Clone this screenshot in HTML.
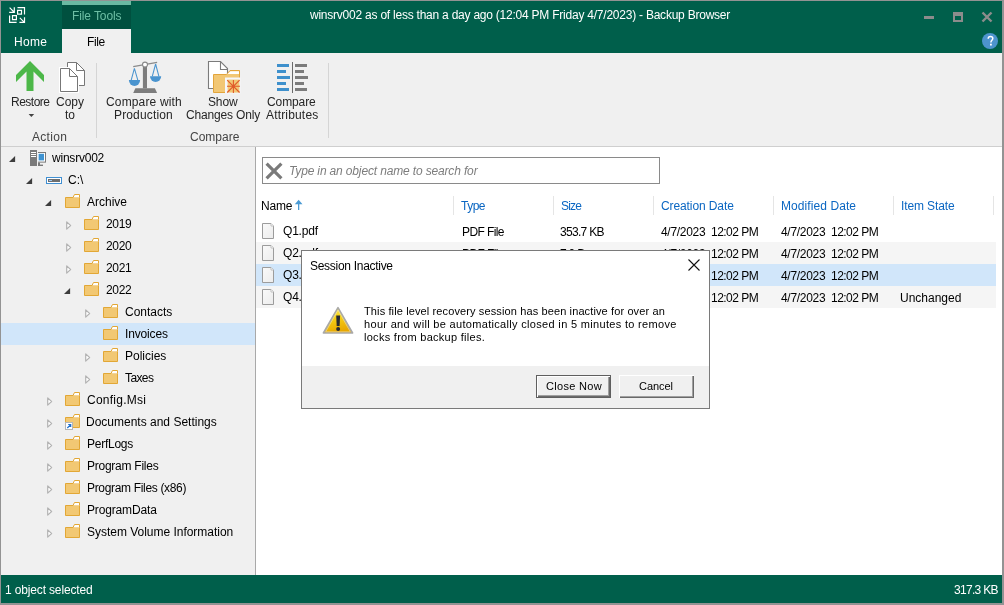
<!DOCTYPE html>
<html><head><meta charset="utf-8"><style>
html,body{margin:0;padding:0;width:1004px;height:605px;overflow:hidden;background:#fff}
.t{position:absolute;will-change:transform;font-family:"Liberation Sans",sans-serif;font-size:12px;white-space:pre;line-height:14px}
svg{display:block}
</style></head><body>
<div style="position:absolute;left:0px;top:0px;width:1004px;height:605px;background:#939393;"></div>
<div style="position:absolute;left:1px;top:1px;width:1001px;height:52px;background:#005f4b;"></div>
<div style="position:absolute;left:62px;top:1px;width:69px;height:4px;background:#6ab9a2;"></div>
<div style="position:absolute;left:62px;top:5px;width:69px;height:24px;background:#00503f;"></div>
<div style="position:absolute;left:62px;top:29px;width:69px;height:24px;background:#f0f0f0;"></div>
<svg style="position:absolute;left:0px;top:0px" width="40" height="40" viewBox="0 0 40 40"><g fill="none" stroke="#fff" stroke-width="1.2">
<path d="M9.6 7.6 L14 12 M9.2 12.3 H14.3 V7.2" />
<path d="M17.5 7.6 H24.5 V14.6 M17.6 10.3 H21.5 V14.2 H17.6 Z" />
<path d="M9.6 15.4 V22.3 H16.6 M12.5 15.6 H16.4 V19.6 H12.5 Z" />
<path d="M19.8 17.8 L24.2 22.2 M19.4 22.3 H24.5 V17.2" />
</g></svg>
<div class="t" style="left:310px;top:8px;color:#fff;letter-spacing:-0.23px;">winsrv002 as of less than a day ago (12:04 PM Friday 4/7/2023) - Backup Browser</div>
<div class="t" style="left:72px;top:9px;color:#6dbfa5;letter-spacing:-0.1px;">File Tools</div>
<div class="t" style="left:14px;top:35px;color:#fff;letter-spacing:0.3px;">Home</div>
<div class="t" style="left:87px;top:35px;color:#000;letter-spacing:-0.4px;">File</div>
<div style="position:absolute;left:924px;top:16px;width:10px;height:3px;background:#8c8c8c;"></div>
<div style="position:absolute;left:953px;top:12px;width:6px;height:4px;background:transparent;border:2px solid #8c8c8c;border-top-width:4px"></div>
<svg style="position:absolute;left:980px;top:10px" width="14" height="14" viewBox="0 0 14 14"><path d="M2.5 2.5 L11.5 11.5 M11.5 2.5 L2.5 11.5" stroke="#8c8c8c" stroke-width="2.4"/></svg>
<svg style="position:absolute;left:982px;top:33px" width="16" height="16" viewBox="0 0 16 16"><circle cx="8" cy="8" r="8" fill="#4d94cd"/><path d="M6.2 5.8 C6.2 4.3 7.1 3.6 8.5 3.6 C9.9 3.6 10.8 4.4 10.8 5.6 C10.8 7.2 8.9 7.4 8.9 9.4" fill="none" stroke="#fff" stroke-width="1.5"/><rect x="8" y="10.7" width="1.8" height="1.8" fill="#fff"/></svg>
<div style="position:absolute;left:1px;top:53px;width:1001px;height:93px;background:#f0f0f0;"></div>
<div style="position:absolute;left:62px;top:53px;width:69px;height:1px;background:#f0f0f0;"></div>
<div style="position:absolute;left:1px;top:146px;width:1001px;height:1px;background:#cfcfcf;"></div>
<div style="position:absolute;left:96px;top:63px;width:1px;height:75px;background:#d5d5d5;"></div>
<div style="position:absolute;left:328px;top:63px;width:1px;height:75px;background:#d5d5d5;"></div>
<svg style="position:absolute;left:0px;top:55px" width="60" height="40" viewBox="0 0 60 40"><path d="M30 6 L44 20 V27 L33.5 16.5 V36 H26.5 V16.5 L16 27 V20 Z" fill="#4cb748"/></svg>
<div class="t" style="left:11px;top:95px;color:#262626;letter-spacing:-0.5px;">Restore</div>
<svg style="position:absolute;left:26px;top:112px" width="10" height="6" viewBox="0 0 10 6"><path d="M2.6 2 H8.2 L5.4 4.9 Z" fill="#444"/></svg>
<svg style="position:absolute;left:56px;top:58px" width="34" height="38" viewBox="0 0 34 38"><g fill="#fff" stroke="#777" stroke-width="1">
<path d="M11.5 4.5 H20.5 L28.5 12.5 V27.5 H11.5 Z"/><path d="M20.5 4.5 V12.5 H28.5" fill="none"/>
<path d="M4.5 10.5 H13.5 L21.5 18.5 V33.5 H4.5 Z" stroke="#fff" stroke-width="3"/>
<path d="M4.5 10.5 H13.5 L21.5 18.5 V33.5 H4.5 Z"/><path d="M13.5 10.5 V18.5 H21.5" fill="none"/>
</g></svg>
<div class="t" style="left:56px;top:95px;color:#262626;">Copy</div>
<div class="t" style="left:65px;top:108px;color:#262626;">to</div>
<div class="t" style="left:32px;top:130px;color:#444;letter-spacing:0.3px;">Action</div>
<svg style="position:absolute;left:125px;top:58px" width="40" height="38" viewBox="0 0 40 38">
<path d="M8.2 8.6 L32.1 4.4" stroke="#8a8a8a" stroke-width="1.1"/>
<rect x="17.9" y="8" width="4.1" height="22.4" fill="#7d7d7d"/>
<path d="M10.4 30.2 H29.9 L32.1 34.9 H8.2 Z" fill="#7d7d7d"/>
<circle cx="20" cy="6.6" r="2.5" fill="#fff" stroke="#8a8a8a" stroke-width="1.1"/>
<path d="M9.4 10.4 L6.2 22.2 M9.4 10.4 L12.8 22.2 M30.6 6 L27.3 18.4 M30.6 6 L33.9 18.4" stroke="#4a94cf" stroke-width="1.05" fill="none"/>
<path d="M3.9 22 H15.1 A5.6 6 0 0 1 3.9 22 Z" fill="#4a94cf"/>
<path d="M25 18.2 H36.2 A5.6 5.8 0 0 1 25 18.2 Z" fill="#4a94cf"/>
</svg>
<div class="t" style="left:106px;top:95px;color:#262626;letter-spacing:0.15px;">Compare with</div>
<div class="t" style="left:114px;top:108px;color:#262626;letter-spacing:0.15px;">Production</div>
<svg style="position:absolute;left:204px;top:58px" width="40" height="38" viewBox="0 0 40 38">
<path d="M4.5 3.5 H16.5 L23.5 10.5 V30.5 H4.5 Z" fill="#fff" stroke="#7b7b7b" stroke-width="1.1"/>
<path d="M16.5 3.5 V11.5 H23.5" fill="none" stroke="#7b7b7b" stroke-width="1.1"/>
<path d="M22.5 16.5 L26 12.5 H35.5 V34.5 H9.5 V16.5 Z" fill="#f2c774" stroke="#e3a53b" stroke-width="1"/>
<path d="M23.5 16 L26.4 13.3 H35 V16 Z" fill="#fff"/>
<path d="M21 19.5 H36.5 V35.5 H21 Z" fill="#f6f7fa"/>
<path d="M23.6 21.6 H35.4 V34.6 H23.6 Z" fill="#f2c774"/>
<g stroke="#e05a2a" stroke-width="1.1">
<path d="M29.4 22 V35 M23 28.3 H36 M23.2 22.1 L35.6 34.5 M35.6 22.1 L23.2 34.5"/>
</g>

</svg>
<div class="t" style="left:208px;top:95px;color:#262626;letter-spacing:-0.13px;">Show</div>
<div class="t" style="left:186px;top:108px;color:#262626;letter-spacing:-0.17px;">Changes Only</div>
<svg style="position:absolute;left:270px;top:58px" width="40" height="38" viewBox="0 0 40 38"><rect x="7" y="6" width="12" height="3" fill="#3e90cc"/><rect x="25" y="6" width="12" height="3" fill="#7b7b7b"/><rect x="7" y="12" width="9" height="3" fill="#3e90cc"/><rect x="25" y="12" width="9" height="3" fill="#7b7b7b"/><rect x="7" y="18" width="13" height="3" fill="#3e90cc"/><rect x="25" y="18" width="13" height="3" fill="#7b7b7b"/><rect x="7" y="24" width="9" height="3" fill="#3e90cc"/><rect x="25" y="24" width="9" height="3" fill="#7b7b7b"/><rect x="7" y="30" width="12" height="3" fill="#3e90cc"/><rect x="25" y="30" width="12" height="3" fill="#7b7b7b"/><rect x="22" y="4" width="1" height="31" fill="#6a6a6a"/></svg>
<div class="t" style="left:267px;top:95px;color:#262626;letter-spacing:-0.1px;">Compare</div>
<div class="t" style="left:266px;top:108px;color:#262626;letter-spacing:0.17px;">Attributes</div>
<div class="t" style="left:190px;top:130px;color:#444;">Compare</div>
<div style="position:absolute;left:1px;top:147px;width:254px;height:428px;background:#f0f0f0;"></div>
<div style="position:absolute;left:255px;top:147px;width:1px;height:428px;background:#a9a9a9;"></div>
<div style="position:absolute;left:256px;top:147px;width:746px;height:428px;background:#fff;"></div>
<svg style="position:absolute;left:9px;top:156px" width="7" height="7" viewBox="0 0 7 7"><path d="M0 6.1 H6.1 V0 Z" fill="#3d3d3d"/></svg>
<svg style="position:absolute;left:30px;top:150px" width="17" height="17" viewBox="0 0 17 17"><rect x="0" y="0" width="7" height="16" fill="#7a7a7a"/>
<rect x="1" y="2" width="5" height="1" fill="#fff"/><rect x="1" y="4" width="5" height="1" fill="#fff"/><rect x="1" y="6" width="5" height="1" fill="#fff"/>
<rect x="8" y="2" width="8" height="10.6" fill="#7a7a7a"/><rect x="8" y="3" width="7" height="8.6" fill="#fff"/><rect x="8.6" y="3.8" width="5.4" height="6.6" fill="#3f93d1"/>
<rect x="8" y="12.6" width="2" height="3.4" fill="#7a7a7a"/><rect x="8" y="14.6" width="5" height="1.4" fill="#7a7a7a"/></svg>
<div class="t" style="left:52px;top:151px;color:#000;letter-spacing:-0.22px;">winsrv002</div>
<svg style="position:absolute;left:26px;top:178px" width="7" height="7" viewBox="0 0 7 7"><path d="M0 6.1 H6.1 V0 Z" fill="#3d3d3d"/></svg>
<svg style="position:absolute;left:46px;top:177px" width="16" height="7" viewBox="0 0 16 7"><rect x="0.5" y="0.5" width="15" height="6" fill="#fff" stroke="#3f8fd2"/><rect x="2" y="2" width="12" height="3" fill="#6e6e6e"/><rect x="3" y="3" width="3" height="1" fill="#9fc8ee"/></svg>
<div class="t" style="left:68px;top:173px;color:#000;">C:\</div>
<svg style="position:absolute;left:45px;top:200px" width="7" height="7" viewBox="0 0 7 7"><path d="M0 6.1 H6.1 V0 Z" fill="#3d3d3d"/></svg>
<svg style="position:absolute;left:65px;top:194px" width="15" height="14" viewBox="0 0 15 14"><path d="M0.5 3.5 H14.5 V13.5 H0.5 Z" fill="#f2c873" stroke="#e2a735"/>
<path d="M8 3.5 L9.5 0.5 H14.5 V3.5" fill="#fff" stroke="#e2a735"/></svg>
<div class="t" style="left:87px;top:195px;color:#000;">Archive</div>
<svg style="position:absolute;left:66px;top:221px" width="6" height="9" viewBox="0 0 6 9"><path d="M0.7 0.9 L4.6 4.5 L0.7 8.1 Z" fill="#fff" stroke="#b3b3b3" stroke-width="1.2" stroke-linejoin="round"/></svg>
<svg style="position:absolute;left:84px;top:216px" width="15" height="14" viewBox="0 0 15 14"><path d="M0.5 3.5 H14.5 V13.5 H0.5 Z" fill="#f2c873" stroke="#e2a735"/>
<path d="M8 3.5 L9.5 0.5 H14.5 V3.5" fill="#fff" stroke="#e2a735"/></svg>
<div class="t" style="left:106px;top:217px;color:#000;letter-spacing:-0.3px;">2019</div>
<svg style="position:absolute;left:66px;top:243px" width="6" height="9" viewBox="0 0 6 9"><path d="M0.7 0.9 L4.6 4.5 L0.7 8.1 Z" fill="#fff" stroke="#b3b3b3" stroke-width="1.2" stroke-linejoin="round"/></svg>
<svg style="position:absolute;left:84px;top:238px" width="15" height="14" viewBox="0 0 15 14"><path d="M0.5 3.5 H14.5 V13.5 H0.5 Z" fill="#f2c873" stroke="#e2a735"/>
<path d="M8 3.5 L9.5 0.5 H14.5 V3.5" fill="#fff" stroke="#e2a735"/></svg>
<div class="t" style="left:106px;top:239px;color:#000;letter-spacing:-0.3px;">2020</div>
<svg style="position:absolute;left:66px;top:265px" width="6" height="9" viewBox="0 0 6 9"><path d="M0.7 0.9 L4.6 4.5 L0.7 8.1 Z" fill="#fff" stroke="#b3b3b3" stroke-width="1.2" stroke-linejoin="round"/></svg>
<svg style="position:absolute;left:84px;top:260px" width="15" height="14" viewBox="0 0 15 14"><path d="M0.5 3.5 H14.5 V13.5 H0.5 Z" fill="#f2c873" stroke="#e2a735"/>
<path d="M8 3.5 L9.5 0.5 H14.5 V3.5" fill="#fff" stroke="#e2a735"/></svg>
<div class="t" style="left:106px;top:261px;color:#000;letter-spacing:-0.3px;">2021</div>
<svg style="position:absolute;left:64px;top:288px" width="7" height="7" viewBox="0 0 7 7"><path d="M0 6.1 H6.1 V0 Z" fill="#3d3d3d"/></svg>
<svg style="position:absolute;left:84px;top:282px" width="15" height="14" viewBox="0 0 15 14"><path d="M0.5 3.5 H14.5 V13.5 H0.5 Z" fill="#f2c873" stroke="#e2a735"/>
<path d="M8 3.5 L9.5 0.5 H14.5 V3.5" fill="#fff" stroke="#e2a735"/></svg>
<div class="t" style="left:106px;top:283px;color:#000;letter-spacing:-0.3px;">2022</div>
<svg style="position:absolute;left:85px;top:309px" width="6" height="9" viewBox="0 0 6 9"><path d="M0.7 0.9 L4.6 4.5 L0.7 8.1 Z" fill="#fff" stroke="#b3b3b3" stroke-width="1.2" stroke-linejoin="round"/></svg>
<svg style="position:absolute;left:103px;top:304px" width="15" height="14" viewBox="0 0 15 14"><path d="M0.5 3.5 H14.5 V13.5 H0.5 Z" fill="#f2c873" stroke="#e2a735"/>
<path d="M8 3.5 L9.5 0.5 H14.5 V3.5" fill="#fff" stroke="#e2a735"/></svg>
<div class="t" style="left:125px;top:305px;color:#000;">Contacts</div>
<div style="position:absolute;left:1px;top:323px;width:254px;height:22px;background:#d1e6fa;"></div>
<svg style="position:absolute;left:103px;top:326px" width="15" height="14" viewBox="0 0 15 14"><path d="M0.5 3.5 H14.5 V13.5 H0.5 Z" fill="#f2c873" stroke="#e2a735"/>
<path d="M8 3.5 L9.5 0.5 H14.5 V3.5" fill="#fff" stroke="#e2a735"/></svg>
<div class="t" style="left:125px;top:327px;color:#000;letter-spacing:-0.15px;">Invoices</div>
<svg style="position:absolute;left:85px;top:353px" width="6" height="9" viewBox="0 0 6 9"><path d="M0.7 0.9 L4.6 4.5 L0.7 8.1 Z" fill="#fff" stroke="#b3b3b3" stroke-width="1.2" stroke-linejoin="round"/></svg>
<svg style="position:absolute;left:103px;top:348px" width="15" height="14" viewBox="0 0 15 14"><path d="M0.5 3.5 H14.5 V13.5 H0.5 Z" fill="#f2c873" stroke="#e2a735"/>
<path d="M8 3.5 L9.5 0.5 H14.5 V3.5" fill="#fff" stroke="#e2a735"/></svg>
<div class="t" style="left:125px;top:349px;color:#000;">Policies</div>
<svg style="position:absolute;left:85px;top:375px" width="6" height="9" viewBox="0 0 6 9"><path d="M0.7 0.9 L4.6 4.5 L0.7 8.1 Z" fill="#fff" stroke="#b3b3b3" stroke-width="1.2" stroke-linejoin="round"/></svg>
<svg style="position:absolute;left:103px;top:370px" width="15" height="14" viewBox="0 0 15 14"><path d="M0.5 3.5 H14.5 V13.5 H0.5 Z" fill="#f2c873" stroke="#e2a735"/>
<path d="M8 3.5 L9.5 0.5 H14.5 V3.5" fill="#fff" stroke="#e2a735"/></svg>
<div class="t" style="left:125px;top:371px;color:#000;letter-spacing:-0.6px;">Taxes</div>
<svg style="position:absolute;left:47px;top:397px" width="6" height="9" viewBox="0 0 6 9"><path d="M0.7 0.9 L4.6 4.5 L0.7 8.1 Z" fill="#fff" stroke="#b3b3b3" stroke-width="1.2" stroke-linejoin="round"/></svg>
<svg style="position:absolute;left:65px;top:392px" width="15" height="14" viewBox="0 0 15 14"><path d="M0.5 3.5 H14.5 V13.5 H0.5 Z" fill="#f2c873" stroke="#e2a735"/>
<path d="M8 3.5 L9.5 0.5 H14.5 V3.5" fill="#fff" stroke="#e2a735"/></svg>
<div class="t" style="left:87px;top:393px;color:#000;letter-spacing:0.25px;">Config.Msi</div>
<svg style="position:absolute;left:47px;top:419px" width="6" height="9" viewBox="0 0 6 9"><path d="M0.7 0.9 L4.6 4.5 L0.7 8.1 Z" fill="#fff" stroke="#b3b3b3" stroke-width="1.2" stroke-linejoin="round"/></svg>
<svg style="position:absolute;left:65px;top:414px" width="15" height="14" viewBox="0 0 15 14"><path d="M0.5 3.5 H14.5 V13.5 H0.5 Z" fill="#f2c873" stroke="#e2a735"/>
<path d="M8 3.5 L9.5 0.5 H14.5 V3.5" fill="#fff" stroke="#e2a735"/></svg>
<svg style="position:absolute;left:65px;top:422px" width="8" height="8" viewBox="0 0 8 8"><rect x="0.5" y="0.5" width="7" height="7" fill="#fff" stroke="#b5b5b5"/><path d="M2.3 6 L5.5 2.8 M3.2 2.5 H5.7 V5" stroke="#1c6fd0" stroke-width="1.2" fill="none"/></svg>
<div class="t" style="left:86px;top:415px;color:#000;">Documents and Settings</div>
<svg style="position:absolute;left:47px;top:441px" width="6" height="9" viewBox="0 0 6 9"><path d="M0.7 0.9 L4.6 4.5 L0.7 8.1 Z" fill="#fff" stroke="#b3b3b3" stroke-width="1.2" stroke-linejoin="round"/></svg>
<svg style="position:absolute;left:65px;top:436px" width="15" height="14" viewBox="0 0 15 14"><path d="M0.5 3.5 H14.5 V13.5 H0.5 Z" fill="#f2c873" stroke="#e2a735"/>
<path d="M8 3.5 L9.5 0.5 H14.5 V3.5" fill="#fff" stroke="#e2a735"/></svg>
<div class="t" style="left:87px;top:437px;color:#000;letter-spacing:-0.25px;">PerfLogs</div>
<svg style="position:absolute;left:47px;top:463px" width="6" height="9" viewBox="0 0 6 9"><path d="M0.7 0.9 L4.6 4.5 L0.7 8.1 Z" fill="#fff" stroke="#b3b3b3" stroke-width="1.2" stroke-linejoin="round"/></svg>
<svg style="position:absolute;left:65px;top:458px" width="15" height="14" viewBox="0 0 15 14"><path d="M0.5 3.5 H14.5 V13.5 H0.5 Z" fill="#f2c873" stroke="#e2a735"/>
<path d="M8 3.5 L9.5 0.5 H14.5 V3.5" fill="#fff" stroke="#e2a735"/></svg>
<div class="t" style="left:87px;top:459px;color:#000;letter-spacing:-0.25px;">Program Files</div>
<svg style="position:absolute;left:47px;top:485px" width="6" height="9" viewBox="0 0 6 9"><path d="M0.7 0.9 L4.6 4.5 L0.7 8.1 Z" fill="#fff" stroke="#b3b3b3" stroke-width="1.2" stroke-linejoin="round"/></svg>
<svg style="position:absolute;left:65px;top:480px" width="15" height="14" viewBox="0 0 15 14"><path d="M0.5 3.5 H14.5 V13.5 H0.5 Z" fill="#f2c873" stroke="#e2a735"/>
<path d="M8 3.5 L9.5 0.5 H14.5 V3.5" fill="#fff" stroke="#e2a735"/></svg>
<div class="t" style="left:87px;top:481px;color:#000;letter-spacing:-0.33px;">Program Files (x86)</div>
<svg style="position:absolute;left:47px;top:507px" width="6" height="9" viewBox="0 0 6 9"><path d="M0.7 0.9 L4.6 4.5 L0.7 8.1 Z" fill="#fff" stroke="#b3b3b3" stroke-width="1.2" stroke-linejoin="round"/></svg>
<svg style="position:absolute;left:65px;top:502px" width="15" height="14" viewBox="0 0 15 14"><path d="M0.5 3.5 H14.5 V13.5 H0.5 Z" fill="#f2c873" stroke="#e2a735"/>
<path d="M8 3.5 L9.5 0.5 H14.5 V3.5" fill="#fff" stroke="#e2a735"/></svg>
<div class="t" style="left:87px;top:503px;color:#000;letter-spacing:-0.15px;">ProgramData</div>
<svg style="position:absolute;left:47px;top:529px" width="6" height="9" viewBox="0 0 6 9"><path d="M0.7 0.9 L4.6 4.5 L0.7 8.1 Z" fill="#fff" stroke="#b3b3b3" stroke-width="1.2" stroke-linejoin="round"/></svg>
<svg style="position:absolute;left:65px;top:524px" width="15" height="14" viewBox="0 0 15 14"><path d="M0.5 3.5 H14.5 V13.5 H0.5 Z" fill="#f2c873" stroke="#e2a735"/>
<path d="M8 3.5 L9.5 0.5 H14.5 V3.5" fill="#fff" stroke="#e2a735"/></svg>
<div class="t" style="left:87px;top:525px;color:#000;letter-spacing:-0.02px;">System Volume Information</div>
<div style="position:absolute;left:262px;top:157px;width:398px;height:27px;background:#fff;box-sizing:border-box;border:1px solid #8a8a8a"></div>
<svg style="position:absolute;left:264px;top:161px" width="20" height="20" viewBox="0 0 20 20"><path d="M2.6 2.6 L17.4 17.4 M17.4 2.6 L2.6 17.4" stroke="#7a7a7a" stroke-width="3.2"/></svg>
<div class="t" style="left:289px;top:164px;color:#7d7d7d;letter-spacing:-0.15px;font-style:italic">Type in an object name to search for</div>
<div style="position:absolute;left:453px;top:196px;width:1px;height:19px;background:#e5e5e5;"></div>
<div style="position:absolute;left:553px;top:196px;width:1px;height:19px;background:#e5e5e5;"></div>
<div style="position:absolute;left:653px;top:196px;width:1px;height:19px;background:#e5e5e5;"></div>
<div style="position:absolute;left:773px;top:196px;width:1px;height:19px;background:#e5e5e5;"></div>
<div style="position:absolute;left:893px;top:196px;width:1px;height:19px;background:#e5e5e5;"></div>
<div style="position:absolute;left:993px;top:196px;width:1px;height:19px;background:#e5e5e5;"></div>
<div class="t" style="left:261px;top:199px;color:#000;letter-spacing:-0.2px;">Name</div>
<svg style="position:absolute;left:294px;top:199px" width="9" height="12" viewBox="0 0 9 12"><rect x="4" y="4" width="1.3" height="7" fill="#4a9ad4"/><path d="M0.8 5.2 L4.65 0.8 L8.5 5.2 Z" fill="#4a9ad4"/></svg>
<div class="t" style="left:461px;top:199px;color:#0a66c2;letter-spacing:-0.5px;">Type</div>
<div class="t" style="left:561px;top:199px;color:#0a66c2;letter-spacing:-0.8px;">Size</div>
<div class="t" style="left:661px;top:199px;color:#0a66c2;letter-spacing:-0.1px;">Creation Date</div>
<div class="t" style="left:781px;top:199px;color:#0a66c2;letter-spacing:0.08px;">Modified Date</div>
<div class="t" style="left:901px;top:199px;color:#0a66c2;letter-spacing:-0.11px;">Item State</div>
<svg style="position:absolute;left:262px;top:223px" width="12" height="16" viewBox="0 0 12 16"><defs><linearGradient id="dg" x1="0" y1="0" x2="1" y2="1"><stop offset="0" stop-color="#fafafa"/><stop offset="1" stop-color="#ececec"/></linearGradient></defs><path d="M0.5 0.5 H9 L11.5 3 V15.5 H0.5 Z" fill="url(#dg)" stroke="#9c9c9c"/><path d="M9 0.5 V3 H11.5" fill="#fff" stroke="#c0c0c0"/></svg>
<div class="t" style="left:283px;top:224px;color:#000;letter-spacing:-0.2px;">Q1.pdf</div>
<div class="t" style="left:462px;top:225px;color:#000;letter-spacing:-0.6px;">PDF File</div>
<div class="t" style="left:560px;top:225px;color:#000;letter-spacing:-0.7px;">353.7 KB</div>
<div class="t" style="left:661px;top:225px;color:#000;letter-spacing:-0.3px;">4/7/2023</div>
<div class="t" style="left:711px;top:225px;color:#000;letter-spacing:-0.52px;">12:02 PM</div>
<div class="t" style="left:781px;top:225px;color:#000;letter-spacing:-0.3px;">4/7/2023</div>
<div class="t" style="left:831px;top:225px;color:#000;letter-spacing:-0.52px;">12:02 PM</div>
<div style="position:absolute;left:256px;top:242px;width:740px;height:22px;background:#f5f5f5;"></div>
<svg style="position:absolute;left:262px;top:245px" width="12" height="16" viewBox="0 0 12 16"><defs><linearGradient id="dg" x1="0" y1="0" x2="1" y2="1"><stop offset="0" stop-color="#fafafa"/><stop offset="1" stop-color="#ececec"/></linearGradient></defs><path d="M0.5 0.5 H9 L11.5 3 V15.5 H0.5 Z" fill="url(#dg)" stroke="#9c9c9c"/><path d="M9 0.5 V3 H11.5" fill="#fff" stroke="#c0c0c0"/></svg>
<div class="t" style="left:283px;top:246px;color:#000;letter-spacing:-0.2px;">Q2.pdf</div>
<div class="t" style="left:462px;top:247px;color:#000;letter-spacing:-0.6px;">PDF File</div>
<div class="t" style="left:560px;top:247px;color:#000;letter-spacing:-0.7px;">7.0 B</div>
<div class="t" style="left:661px;top:247px;color:#000;letter-spacing:-0.3px;">4/7/2023</div>
<div class="t" style="left:711px;top:247px;color:#000;letter-spacing:-0.52px;">12:02 PM</div>
<div class="t" style="left:781px;top:247px;color:#000;letter-spacing:-0.3px;">4/7/2023</div>
<div class="t" style="left:831px;top:247px;color:#000;letter-spacing:-0.52px;">12:02 PM</div>
<div style="position:absolute;left:256px;top:264px;width:740px;height:22px;background:#d1e6fa;"></div>
<svg style="position:absolute;left:262px;top:267px" width="12" height="16" viewBox="0 0 12 16"><defs><linearGradient id="dg" x1="0" y1="0" x2="1" y2="1"><stop offset="0" stop-color="#fafafa"/><stop offset="1" stop-color="#ececec"/></linearGradient></defs><path d="M0.5 0.5 H9 L11.5 3 V15.5 H0.5 Z" fill="url(#dg)" stroke="#9c9c9c"/><path d="M9 0.5 V3 H11.5" fill="#fff" stroke="#c0c0c0"/></svg>
<div class="t" style="left:283px;top:268px;color:#000;letter-spacing:-0.2px;">Q3.pdf</div>
<div class="t" style="left:462px;top:269px;color:#000;letter-spacing:-0.6px;">PDF File</div>
<div class="t" style="left:560px;top:269px;color:#000;letter-spacing:-0.7px;">12.4 KB</div>
<div class="t" style="left:661px;top:269px;color:#000;letter-spacing:-0.3px;">4/7/2023</div>
<div class="t" style="left:711px;top:269px;color:#000;letter-spacing:-0.52px;">12:02 PM</div>
<div class="t" style="left:781px;top:269px;color:#000;letter-spacing:-0.3px;">4/7/2023</div>
<div class="t" style="left:831px;top:269px;color:#000;letter-spacing:-0.52px;">12:02 PM</div>
<div style="position:absolute;left:256px;top:286px;width:740px;height:22px;background:#f5f5f5;"></div>
<svg style="position:absolute;left:262px;top:289px" width="12" height="16" viewBox="0 0 12 16"><defs><linearGradient id="dg" x1="0" y1="0" x2="1" y2="1"><stop offset="0" stop-color="#fafafa"/><stop offset="1" stop-color="#ececec"/></linearGradient></defs><path d="M0.5 0.5 H9 L11.5 3 V15.5 H0.5 Z" fill="url(#dg)" stroke="#9c9c9c"/><path d="M9 0.5 V3 H11.5" fill="#fff" stroke="#c0c0c0"/></svg>
<div class="t" style="left:283px;top:290px;color:#000;letter-spacing:-0.2px;">Q4.pdf</div>
<div class="t" style="left:462px;top:291px;color:#000;letter-spacing:-0.6px;">PDF File</div>
<div class="t" style="left:560px;top:291px;color:#000;letter-spacing:-0.7px;">2.1 KB</div>
<div class="t" style="left:661px;top:291px;color:#000;letter-spacing:-0.3px;">4/7/2023</div>
<div class="t" style="left:711px;top:291px;color:#000;letter-spacing:-0.52px;">12:02 PM</div>
<div class="t" style="left:781px;top:291px;color:#000;letter-spacing:-0.3px;">4/7/2023</div>
<div class="t" style="left:831px;top:291px;color:#000;letter-spacing:-0.52px;">12:02 PM</div>
<div class="t" style="left:900px;top:291px;color:#000;">Unchanged</div>
<div style="position:absolute;left:1px;top:575px;width:1001px;height:28px;background:#005f4b;"></div>
<div class="t" style="left:5px;top:583px;color:#fff;letter-spacing:-0.15px;">1 object selected</div>
<div class="t" style="left:954px;top:583px;color:#fff;letter-spacing:-0.7px;">317.3 KB</div>
<div style="position:absolute;left:301px;top:250px;width:409px;height:159px;background:#fff;box-sizing:border-box;border:1px solid #7a7a7a"></div>
<div style="position:absolute;left:302px;top:366px;width:407px;height:42px;background:#f0f0f0;"></div>
<div class="t" style="left:310px;top:259px;color:#000;letter-spacing:-0.29px;">Session Inactive</div>
<svg style="position:absolute;left:688px;top:259px" width="12" height="12" viewBox="0 0 12 12"><path d="M0.5 0.5 L11.5 11.5 M11.5 0.5 L0.5 11.5" stroke="#111" stroke-width="1.1"/></svg>
<svg style="position:absolute;left:322px;top:306px" width="32" height="29" viewBox="0 0 32 29"><defs><linearGradient id="wg" x1="0" y1="0" x2="0.3" y2="1"><stop offset="0" stop-color="#fff27a"/><stop offset="0.45" stop-color="#f7d418"/><stop offset="1" stop-color="#e8a800"/></linearGradient></defs>
<path d="M16 1.6 L30.6 27 H1.4 Z" fill="url(#wg)" stroke="#a9a9a9" stroke-width="1.6" stroke-linejoin="round"/>
<path d="M16 4 L28.3 25.8 H3.7 Z" fill="none" stroke="#e6e6e6" stroke-width="0.7" stroke-linejoin="round" opacity="0.7"/>
<path d="M14.2 9.5 H18.1 L17.6 20 H14.7 Z" fill="#262a33"/><circle cx="16.15" cy="23" r="2" fill="#262a33"/></svg>
<div class="t" style="left:364px;top:304px;color:#000;font-size:11px;letter-spacing:0.12px;">This file level recovery session has been inactive for over an</div>
<div class="t" style="left:364px;top:317px;color:#000;font-size:11px;letter-spacing:0.32px;">hour and will be automatically closed in 5 minutes to remove</div>
<div class="t" style="left:364px;top:330px;color:#000;font-size:11px;letter-spacing:0.28px;">locks from backup files.</div>
<div style="position:absolute;left:536px;top:375px;width:75px;height:23px;box-sizing:border-box;border:1px solid #5f5f5f;background:#f0f0f0;box-shadow:inset 1px 1px 0 #fff, inset -1px -1px 0 #6a6a6a, inset -2px -2px 0 #a0a0a0"></div>
<div class="t" style="left:546px;top:379px;color:#000;font-size:11px;letter-spacing:0.3px;">Close Now</div>
<div style="position:absolute;left:619px;top:375px;width:75px;height:23px;box-sizing:border-box;background:#f0f0f0;box-shadow:inset 1px 1px 0 #fff, inset -1px -1px 0 #696969, inset -2px -2px 0 #a0a0a0"></div>
<div class="t" style="left:639px;top:379px;color:#000;font-size:11px;letter-spacing:-0.05px;">Cancel</div>
</body></html>
